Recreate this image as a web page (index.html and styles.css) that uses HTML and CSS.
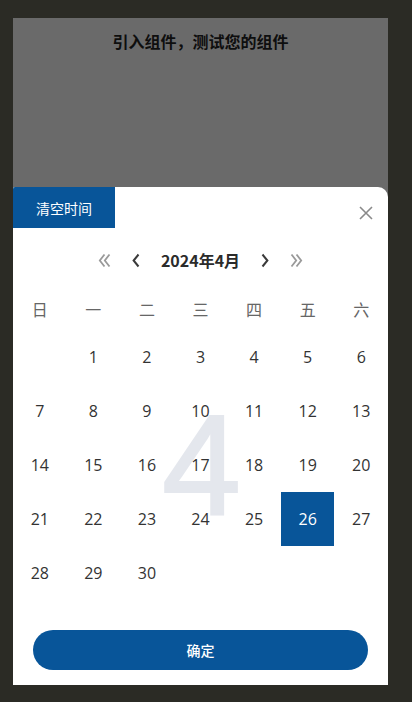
FILE: index.html
```html
<!DOCTYPE html>
<html lang="zh-CN">
<head>
<meta charset="utf-8">
<title>日历</title>
<link rel="stylesheet" href="styles.css">
</head>
<body>
<div class="frame">
  <div class="mask">
    <h1 class="title">引入组件，测试您的组件</h1>
  </div>
  <div class="panel">
    <div class="panel-head">
      <button class="clear-btn">清空时间</button>
      <span class="close" aria-label="关闭">
        <svg width="14" height="14" viewBox="0 0 14 14"><path d="M1 1 L13 13 M13 1 L1 13" stroke="#8a8a8a" stroke-width="1.6" fill="none"/></svg>
      </span>
    </div>
    <div class="nav">
      <svg class="nav-ic" width="13" height="15" viewBox="0 0 13 15"><path d="M6.5 1.5 L1.8 7.5 L6.5 13.5 M11.5 1.5 L6.8 7.5 L11.5 13.5" stroke="#9a9a9a" stroke-width="1.8" fill="none"/></svg>
      <svg class="nav-ic" width="8" height="15" viewBox="0 0 8 15"><path d="M6.5 1.5 L1.6 7.5 L6.5 13.5" stroke="#3a3a3a" stroke-width="2" fill="none"/></svg>
      <span class="month">2024年4月</span>
      <svg class="nav-ic" width="8" height="15" viewBox="0 0 8 15"><path d="M1.5 1.5 L6.4 7.5 L1.5 13.5" stroke="#3a3a3a" stroke-width="2" fill="none"/></svg>
      <svg class="nav-ic" width="13" height="15" viewBox="0 0 13 15"><path d="M1.5 1.5 L6.2 7.5 L1.5 13.5 M6.5 1.5 L11.2 7.5 L6.5 13.5" stroke="#9a9a9a" stroke-width="1.8" fill="none"/></svg>
    </div>
    <div class="weekdays">
      <span>日</span><span>一</span><span>二</span><span>三</span><span>四</span><span>五</span><span>六</span>
    </div>
    <div class="days">
      <div class="watermark">4</div>
      <span></span><span>1</span><span>2</span><span>3</span><span>4</span><span>5</span><span>6</span>
      <span>7</span><span>8</span><span>9</span><span>10</span><span>11</span><span>12</span><span>13</span>
      <span>14</span><span>15</span><span>16</span><span>17</span><span>18</span><span>19</span><span>20</span>
      <span>21</span><span>22</span><span>23</span><span>24</span><span>25</span><span class="selected">26</span><span>27</span>
      <span>28</span><span>29</span><span>30</span><span></span><span></span><span></span><span></span>
    </div>
    <div class="footer">
      <button class="confirm">确定</button>
    </div>
  </div>
</div>
</body>
</html>
```

FILE: styles.css
```css
* { box-sizing: border-box; }
html, body {
  margin: 0;
  padding: 0;
  background: #2b2b25;
}
body {
  font-family: "Open Sans", "Noto Sans CJK SC", sans-serif;
  height: 702px;
  overflow: hidden;
}
.frame {
  width: 375px;
  height: 667px;
  margin: 18px 0 0 13px;
  display: flex;
  flex-direction: column;
  background: #6a6a6a;
}
.mask {
  height: 169px;
  flex: none;
}
.title {
  margin: 0;
  padding-top: 12px;
  text-align: center;
  font-family: "Noto Sans CJK SC", sans-serif;
  font-size: 16px;
  line-height: 22px;
  font-weight: 700;
  color: #0e0e0e;
}
.panel {
  flex: 1;
  background: #fff;
  border-radius: 2px 10px 0 0;
  display: flex;
  flex-direction: column;
  overflow: hidden;
}
.panel-head {
  height: 41px;
  display: flex;
  justify-content: space-between;
  align-items: flex-start;
}
.clear-btn {
  width: 102px;
  height: 41px;
  border: 0;
  margin: 0;
  padding: 0;
  background: #085599;
  color: #fff;
  font-family: "Noto Sans CJK SC", sans-serif;
  font-size: 14px;
}
.close {
  display: flex;
  margin: 19px 15px 0 0;
}
.nav {
  margin-top: 4px;
  height: 56px;
  display: flex;
  justify-content: center;
  align-items: center;
  gap: 21px;
}
.month {
  font-family: "Noto Sans CJK SC", sans-serif;
  font-size: 16px;
  font-weight: 700;
  color: #2b2b2b;
}
.weekdays, .days {
  display: grid;
  grid-template-columns: repeat(7, 1fr);
}
.weekdays {
  height: 42px;
  align-items: center;
}
.weekdays span {
  text-align: center;
  font-family: "Noto Sans CJK SC", sans-serif;
  font-size: 16px;
  color: #666;
}
.days {
  position: relative;
  grid-auto-rows: 54px;
}
.days span {
  position: relative;
  z-index: 1;
  display: flex;
  align-items: center;
  justify-content: center;
  font-size: 16px;
  color: #333;
}
.days span.selected {
  background: #085599;
  color: #fff;
}
.watermark {
  position: absolute;
  left: 0;
  right: 0;
  top: 50%;
  transform: translateY(-50%);
  text-align: center;
  font-family: "Liberation Sans", sans-serif;
  font-size: 142px;
  line-height: 1;
  color: #e4e7ed;
  -webkit-text-stroke: 2px #e4e7ed;
  z-index: 0;
  padding-left: 2px;
}
.footer {
  padding: 30px 20px 15px;
}
.confirm {
  display: block;
  width: 100%;
  height: 40px;
  border: 0;
  border-radius: 20px;
  background: #085599;
  color: #fff;
  font-family: "Noto Sans CJK SC", sans-serif;
  font-size: 14px;
  font-weight: 500;
}
```
